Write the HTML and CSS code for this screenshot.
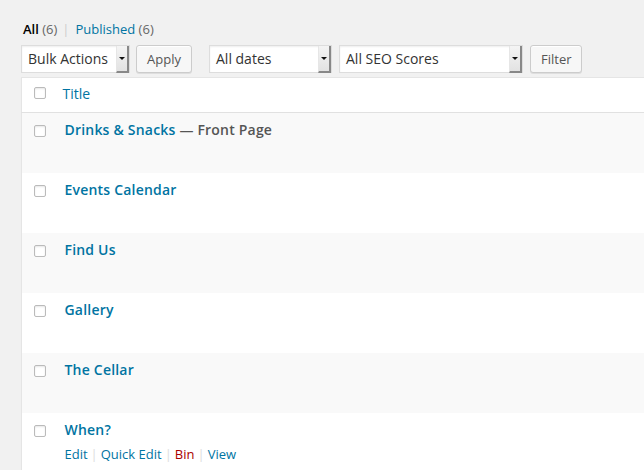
FILE: index.html
```html
<!DOCTYPE html>
<html>
<head>
<meta charset="utf-8">
<link rel="stylesheet" href="styles.css">
</head>
<body>
<div class="wrap">
  <ul class="subsubsub">
    <li class="current">All <span class="count">(6)</span></li>
    <li class="sep">|</li>
    <li><a href="#">Published <span class="count">(6)</span></a></li>
  </ul>
  <div class="tablenav">
    <div class="select w-bulk"><span class="label">Bulk Actions</span><span class="arrow"></span></div>
    <button class="button btn-apply">Apply</button>
    <div class="select w-dates gap-left"><span class="label">All dates</span><span class="arrow"></span></div>
    <div class="select w-seo"><span class="label">All SEO Scores</span><span class="arrow"></span></div>
    <button class="button btn-filter">Filter</button>
  </div>
  <table class="list">
    <thead>
      <tr>
        <th class="check"><input type="checkbox"></th>
        <th class="title-col"><a href="#">Title</a></th>
      </tr>
    </thead>
    <tbody>
      <tr class="alt">
        <td class="check"><input type="checkbox"></td>
        <td class="title-cell"><strong><a href="#">Drinks &amp; Snacks</a> <span class="state">— Front Page</span></strong>
          <div class="row-actions"><a href="#">Edit</a><span class="bar">|</span><a href="#">Quick Edit</a><span class="bar">|</span><a href="#" class="bin">Bin</a><span class="bar">|</span><a href="#">View</a></div></td>
      </tr>
      <tr>
        <td class="check"><input type="checkbox"></td>
        <td class="title-cell"><strong><a href="#">Events Calendar</a></strong>
          <div class="row-actions"><a href="#">Edit</a><span class="bar">|</span><a href="#">Quick Edit</a><span class="bar">|</span><a href="#" class="bin">Bin</a><span class="bar">|</span><a href="#">View</a></div></td>
      </tr>
      <tr class="alt">
        <td class="check"><input type="checkbox"></td>
        <td class="title-cell"><strong><a href="#">Find Us</a></strong>
          <div class="row-actions"><a href="#">Edit</a><span class="bar">|</span><a href="#">Quick Edit</a><span class="bar">|</span><a href="#" class="bin">Bin</a><span class="bar">|</span><a href="#">View</a></div></td>
      </tr>
      <tr>
        <td class="check"><input type="checkbox"></td>
        <td class="title-cell"><strong><a href="#">Gallery</a></strong>
          <div class="row-actions"><a href="#">Edit</a><span class="bar">|</span><a href="#">Quick Edit</a><span class="bar">|</span><a href="#" class="bin">Bin</a><span class="bar">|</span><a href="#">View</a></div></td>
      </tr>
      <tr class="alt">
        <td class="check"><input type="checkbox"></td>
        <td class="title-cell"><strong><a href="#">The Cellar</a></strong>
          <div class="row-actions"><a href="#">Edit</a><span class="bar">|</span><a href="#">Quick Edit</a><span class="bar">|</span><a href="#" class="bin">Bin</a><span class="bar">|</span><a href="#">View</a></div></td>
      </tr>
      <tr class="hover">
        <td class="check"><input type="checkbox"></td>
        <td class="title-cell"><strong><a href="#">When?</a></strong>
          <div class="row-actions"><a href="#">Edit</a><span class="bar">|</span><a href="#">Quick Edit</a><span class="bar">|</span><a href="#" class="bin">Bin</a><span class="bar">|</span><a href="#">View</a></div></td>
      </tr>
    </tbody>
  </table>
</div>
</body>
</html>
```
FILE: styles.css
```css
html, body {
  margin: 0;
  padding: 0;
  overflow: hidden;
  background: #f1f1f1;
  font-family: "Open Sans", "Liberation Sans", sans-serif;
  font-size: 13px;
  color: #444;
}
a { color: #0074a2; text-decoration: none; }
.wrap {
  padding: 20px 0 0 21px;
  width: 660px;
}
.subsubsub {
  list-style: none;
  margin: 0 0 0 2px;
  padding: 0;
  display: flex;
  align-items: center;
  line-height: 18px;
  height: 18px;
}
.subsubsub li { white-space: nowrap; }
.subsubsub .current { font-weight: 600; color: #000; }
.subsubsub .count { color: #666; font-weight: 400; }
.subsubsub .sep { color: #ccc; margin: 0 6px 0 5px; }

.tablenav {
  display: flex;
  align-items: center;
  margin-top: 7px;
  height: 28px;
}
.select {
  box-sizing: border-box;
  height: 28px;
  background: #fff;
  border: 1px solid #ddd;
  box-shadow: inset 0 1px 2px rgba(0,0,0,.07);
  display: flex;
  align-items: stretch;
  color: #333;
  font-size: 14px;
}
.select .label {
  flex: 1;
  padding-left: 6px;
  line-height: 25px;
  white-space: nowrap;
}
.select .arrow {
  position: relative;
  width: 10px;
  margin: 0 0 -1px 0;
  background: linear-gradient(#f4f4f4, #e2e2e2);
  border-left: 1px solid #e6e6e6;
  border-right: 2px solid #888;
  border-bottom: 2px solid #888;
}
.select .arrow::after {
  content: "";
  position: absolute;
  left: 2px;
  top: 11px;
  border-left: 3px solid transparent;
  border-right: 3px solid transparent;
  border-top: 3px solid #111;
}
.w-bulk { width: 109px; }
.w-dates { width: 123px; }
.w-seo { width: 184px; margin-left: 7px; }
.gap-left { margin-left: 17px; }
.button {
  box-sizing: border-box;
  height: 28px;
  padding: 0 10px;
  background: #f7f7f7;
  border: 1px solid #ccc;
  border-radius: 3px;
  box-shadow: inset 0 1px 0 #fff, 0 1px 0 rgba(0,0,0,.08);
  color: #555;
  font-family: "Open Sans", "Liberation Sans", sans-serif;
  font-size: 13px;
}
.btn-apply { width: 56px; margin-left: 6px; }
.btn-filter { width: 52px; margin-left: 7px; }

.list {
  margin-top: 4px;
  width: 640px;
  border-collapse: collapse;
  border: 1px solid #e5e5e5;
  background: #fff;
  box-shadow: 0 1px 1px rgba(0,0,0,.04);
}
.list th, .list td { text-align: left; vertical-align: top; }
.list thead th {
  border-bottom: 1px solid #e1e1e1;
  font-weight: 400;
  font-size: 14px;
  line-height: 19px;
  padding: 6px 0 9px 0;
}
.list th.check, .list td.check {
  width: 33px;
  padding-left: 12px;
  padding-right: 0;
  box-sizing: border-box;
}
.list thead th.check { padding-top: 9px; }
.list .title-col { padding-left: 8px; }
.list tbody tr { height: 60px; }
.list tbody tr.alt { background: #f9f9f9; }
.list td.check { padding-top: 12px; }
.title-cell {
  padding: 7px 10px 8px 10px;
  font-size: 14px;
  line-height: 19px;
  letter-spacing: 0.2px;
}
.title-cell strong { font-weight: 600; }
.title-cell .state { color: #555; }
input[type=checkbox] {
  -webkit-appearance: none;
  appearance: none;
  display: block;
  margin: 0;
  width: 12px;
  height: 12px;
  box-sizing: border-box;
  border: 1px solid #bbb;
  border-radius: 2px;
  background: #fff;
  box-shadow: inset 0 1px 2px rgba(0,0,0,.1);
}
.row-actions {
  margin-top: 6px;
  font-size: 13px;
  line-height: 18px;
  letter-spacing: 0;
  visibility: hidden;
  white-space: nowrap;
}
.hover .row-actions { visibility: visible; }
.row-actions .bar { color: #ddd; margin: 0 3px; }
.row-actions .bin { color: #a00; }
```
